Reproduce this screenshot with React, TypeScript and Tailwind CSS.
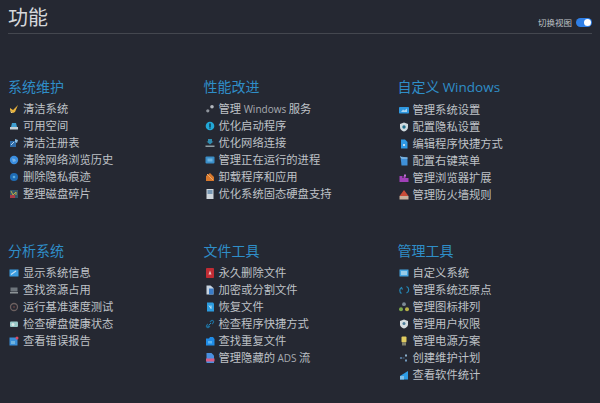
import React from "react";

const I = ({ children }: { children: React.ReactNode }) => (
  <svg viewBox="0 0 12 12" className="h-3 w-3 shrink-0">{children}</svg>
);

const icons: Record<string, React.ReactNode> = {
  broom: <><path d="M2 5l3 2 5-5-3 7-2 1-3-3z" fill="#e8b23c" /><path d="M2 7l3 3-2 0z" fill="#f5d67a" /></>,
  drive: <><path d="M4 3h4l1 4H3z" fill="#3f9ed0" /><rect x="2" y="7" width="8" height="2.5" fill="#c4d0d6" /></>,
  reg: <><rect x="2" y="4" width="6" height="6" fill="#2f6ca8" /><path d="M7 2l3 1-1 3-2-1z" fill="#8cbce0" /><path d="M3 8l3-3" stroke="#b8d4ea" /></>,
  globe: <><circle cx="6" cy="6" r="4.2" fill="#3b8ee0" /><path d="M4 4.5l3 .5 1 2-3 1z" fill="#78b4e8" /></>,
  eraser: <><circle cx="6" cy="6" r="4" fill="#1f6cb4" /><circle cx="6" cy="6" r="1.3" fill="#5cacdc" /></>,
  defrag: <><rect x="2" y="2" width="8" height="8" fill="#35566a" /><rect x="2" y="7" width="5" height="3" fill="#a83c48" /><path d="M3 3l2 4 3-3v3" stroke="#b8ac44" fill="none" /></>,
  gears: <><circle cx="8" cy="3.800" r="1.800" fill="#b4b8be" /><circle cx="3.800" cy="7.800" r="1.600" fill="#8f949c" /></>,
  boost: <><circle cx="6" cy="6" r="4.300" fill="#22a8d8" /><rect x="5.300" y="3.400" width="1.400" height="3.800" fill="#0c3346" /><rect x="5.300" y="7.600" width="1.400" height="1" fill="#0c3346" /></>,
  net: <><path d="M4 2h4v2.500h1.500L6 7.500 2.500 4.500H4z" fill="#2f8cb0" /><rect x="1.500" y="8.500" width="9" height="1.500" fill="#909ea4" /></>,
  proc: <><rect x="1.500" y="2.500" width="9" height="7" rx="1" fill="#3a8ec8" /><rect x="3.500" y="4.500" width="5" height="3" fill="#6cb4e0" /></>,
  uninstall: <><path d="M2 5l4-3 4 4v4H2z" fill="#d8782c" /><path d="M3 3l6 6" stroke="#e8ac70" /></>,
  ssd: <><rect x="2.500" y="1" width="7" height="10" fill="#cfd6dc" /><rect x="3.500" y="2" width="5" height="4" fill="#7898b4" /></>,
  settings: <><rect x="1" y="3" width="10" height="6.500" rx=".8" fill="#2f98e0" /><path d="M3 8l2-2.500 1.500 1L9 4.500V8z" fill="#a8d4f0" /></>,
  shield: <><path d="M6 1.500l4 1.500v3c0 2.500-2 4-4 4.500C4 10 2 8.500 2 6V3z" fill="#d0dade" /><circle cx="6" cy="6" r="1.700" fill="#1f6f8c" /></>,
  shortcut: <><path d="M3 1.500h4l2.500 2.500v6.500H3z" fill="#2f9ae4" /><rect x="5" y="6" width="2" height="2" fill="#bcdcf2" /></>,
  menu: <><path d="M2.500 1.500l7 1v8h-6z" fill="#3f90d8" /><path d="M2.500 1.500l1 1.500h6" fill="none" stroke="#a8cee8" /></>,
  ext: <><path d="M1.500 4h3v2h1V4h2v2h3v4h-9z" fill="#a040b8" /><rect x="6" y="2.500" width="2" height="2" fill="#c070d4" /></>,
  fw: <><path d="M6 1l4.500 6h-9z" fill="#c84c38" /><rect x="1.500" y="7" width="9" height="3.500" fill="#c8b09c" /></>,
  info: <><rect x="1.500" y="2.500" width="9" height="7" fill="#3a9ce0" /><path d="M3 7.500l5-3.500" stroke="#c4e0f4" strokeWidth="1.200" /></>,
  res: <><rect x="2.500" y="3.500" width="7" height="4" fill="#6e757c" /><rect x="2" y="8" width="8" height="1.500" fill="#8c9296" /></>,
  bench: <><circle cx="6" cy="6" r="3.500" fill="none" stroke="#6c6060" strokeWidth="1.300" /><circle cx="6" cy="6" r="1.300" fill="#50383c" /></>,
  health: <><rect x="2" y="3.500" width="8" height="5.500" rx="1" fill="#98c8c8" /><circle cx="5" cy="6.500" r="1.500" fill="#dce8e8" /></>,
  report: <><rect x="1.500" y="2.500" width="8" height="8" fill="#3a8ed8" /><circle cx="9" cy="3" r="1.500" fill="#d84c64" /><rect x="3" y="6" width="4" height="3" fill="#70b4e0" /></>,
  del: <><rect x="2" y="1" width="8" height="10" rx=".8" fill="#c02c34" /><path d="M6 3.500l1.500 4h-3z" fill="#e8c4c4" /></>,
  encrypt: <><path d="M2.500 1.500h4l3 2.500v6.500h-7z" fill="#c8d4e0" /><rect x="5" y="4.500" width="4.500" height="6" fill="#3a7cc8" /></>,
  recover: <><path d="M3 1.500h6l1 1v8H3z" fill="#2c9ce0" /><path d="M5 4.500l2 3V4.500" stroke="#c4e4f4" fill="none" /></>,
  link: <><path d="M3 9.500l2-2M4 6L2.500 7.500a1.500 1.500 0 0 0 2 2L6 8M8 6l1.500-1.500a1.500 1.500 0 0 0-2-2L6 4" stroke="#1f6c98" strokeWidth="1.100" fill="none" /><path d="M5 7l2-2" stroke="#2c88b8" /></>,
  dup: <><path d="M2 3.500h3l1-1.500h3l1.500 2v6.500H2z" fill="#1f8ce8" /><rect x="4" y="6" width="4" height="2.500" fill="#5cb4f0" /></>,
  ads: <><path d="M2.500 1h5l2.500 2.500V11h-7.500z" fill="#4a8fe0" /><rect x="2" y="6.500" width="8.500" height="3" fill="#d85c84" /></>,
  customize: <><rect x="1.500" y="2.500" width="9" height="7" fill="#45a4e0" /><rect x="3" y="4" width="6" height="4" fill="#98cce8" /></>,
  restore: <><path d="M3.500 9.500a3.500 3.500 0 0 1 0-6l1 2M8.500 2.500a3.500 3.500 0 0 1 0 6.500" stroke="#2588b8" strokeWidth="1.200" fill="none" /></>,
  layout: <><circle cx="6" cy="3.200" r="1.900" fill="#7c8a96" /><circle cx="3" cy="8.300" r="2" fill="#7ca84c" /><circle cx="9" cy="8.300" r="2" fill="#b8b048" /></>,
  users: <><path d="M6 1.500l4 1.500v3.500c0 2-2 3.500-4 4-2-.5-4-2-4-4V3z" fill="#d4dce0" /><circle cx="6" cy="5.500" r="1.500" fill="#4a7c98" /></>,
  power: <><rect x="3.500" y="1.500" width="5" height="6" rx="1" fill="#e0cc60" /><rect x="4" y="7.500" width="4" height="3" fill="#80806c" /></>,
  task: <><circle cx="3" cy="6" r="1.100" fill="#5c82a8" /><rect x="7" y="2.500" width="2" height="2" fill="#8cb0cc" /><rect x="7" y="7.500" width="2" height="2" fill="#7098bc" /><path d="M4.500 6h2" stroke="#4c6c8c" /></>,
  stats: <><path d="M2 7l8-5v8.500H2z" fill="#2e9ce4" /><rect x="2" y="7" width="4" height="3.500" fill="#80c0e8" /></>,
};

const Latin = ({ children }: { children: string }) => (
  <span className="font-['Open_Sans',sans-serif] text-[10px] text-[#a8abb1]">{children}</span>
);

type Row = [string, React.ReactNode, string];
type Section = { title: React.ReactNode; key: string; rows: Row[] };

const r = (icon: string, label: string): Row => [icon, label, label];

const sections: Section[] = [
  { key: "a", title: "系统维护", rows: [r("broom", "清洁系统"), r("drive", "可用空间"), r("reg", "清洁注册表"), r("globe", "清除网络浏览历史"), r("eraser", "删除隐私痕迹"), r("defrag", "整理磁盘碎片")] },
  { key: "b", title: "性能改进", rows: [["gears", <>管理 <Latin>Windows</Latin> 服务</>, "svc"], r("boost", "优化启动程序"), r("net", "优化网络连接"), r("proc", "管理正在运行的进程"), r("uninstall", "卸载程序和应用"), r("ssd", "优化系统固态硬盘支持")] },
  { key: "c", title: <>自定义 <span className="font-['Open_Sans',sans-serif] text-[13.500px]">Windows</span></>, rows: [r("settings", "管理系统设置"), r("shield", "配置隐私设置"), r("shortcut", "编辑程序快捷方式"), r("menu", "配置右键菜单"), r("ext", "管理浏览器扩展"), r("fw", "管理防火墙规则")] },
  { key: "d", title: "分析系统", rows: [r("info", "显示系统信息"), r("res", "查找资源占用"), r("bench", "运行基准速度测试"), r("health", "检查硬盘健康状态"), r("report", "查看错误报告")] },
  { key: "e", title: "文件工具", rows: [r("del", "永久删除文件"), r("encrypt", "加密或分割文件"), r("recover", "恢复文件"), r("link", "检查程序快捷方式"), r("dup", "查找重复文件"), ["ads", <>管理隐藏的 <Latin>ADS</Latin> 流</>, "ads"]] },
  { key: "f", title: "管理工具", rows: [r("customize", "自定义系统"), r("restore", "管理系统还原点"), r("layout", "管理图标排列"), r("users", "管理用户权限"), r("power", "管理电源方案"), r("task", "创建维护计划"), r("stats", "查看软件统计")] },
];

export default function App() {
  return (
    <div className="h-[403px] w-[600px] overflow-hidden bg-[#252832] px-2 font-['Noto_Sans_CJK_SC','Noto_Sans',sans-serif] text-[#bfc2c7]">
      <header className="flex h-[34px] items-end justify-between border-b border-[#44474f] pb-[2px]">
        <h1 className="text-[20px] leading-[28px] text-[#d6d8dc]">功能</h1>
        <div className="mb-[3px] flex items-center gap-[4px]">
          <span className="text-[8.5px] leading-3">切换视图</span>
          <span className="flex h-[9px] w-[16px] items-center justify-end rounded-full bg-[#2f7fe6] pr-[1.500px]">
            <span className="h-[7px] w-[7px] rounded-full bg-white" />
          </span>
        </div>
      </header>
      <main className="mt-[42px] grid grid-cols-[195.500px_194px_1fr] grid-rows-[164px_auto]">
        {sections.map((s) => (
          <section key={s.key}>
            <h2 className="mb-[4px] text-[14px] leading-[20px] text-[#2f8ec8]">{s.title}</h2>
            <ul>
              {s.rows.map(([icon, label, id]) => (
                <li key={id} className="flex h-[17px] items-center gap-[3px] text-[11.300px] leading-[17px]">
                  <I>{icons[icon]}</I>
                  <span className="whitespace-pre">{label}</span>
                </li>
              ))}
            </ul>
          </section>
        ))}
      </main>
    </div>
  );
}
